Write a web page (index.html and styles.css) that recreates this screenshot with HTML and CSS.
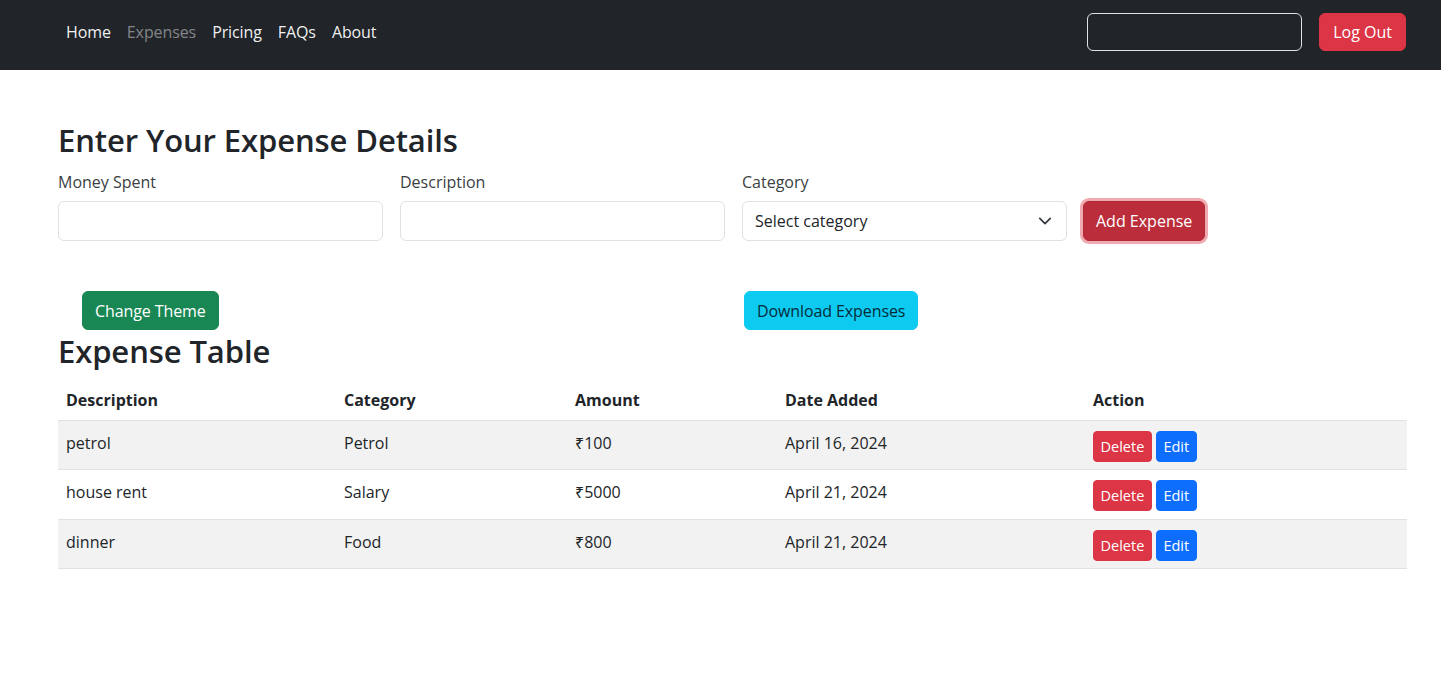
FILE: index.html
```html
<!DOCTYPE html>
<html lang="en">
<head>
<meta charset="utf-8">
<title>Expenses</title>
<link rel="stylesheet" href="styles.css">
</head>
<body>
<nav class="navbar">
  <ul class="nav-links">
    <li><a class="nav-link" href="#">Home</a></li>
    <li><a class="nav-link muted" href="#">Expenses</a></li>
    <li><a class="nav-link" href="#">Pricing</a></li>
    <li><a class="nav-link" href="#">FAQs</a></li>
    <li><a class="nav-link" href="#">About</a></li>
  </ul>
  <div class="nav-right">
    <input class="search" type="text">
    <button class="btn btn-danger btn-logout">Log Out</button>
  </div>
</nav>

<main class="main">
  <h2 class="title">Enter Your Expense Details</h2>
  <form class="expense-form">
    <div class="field">
      <label class="label">Money Spent</label>
      <input class="control" type="text">
    </div>
    <div class="field">
      <label class="label">Description</label>
      <input class="control" type="text">
    </div>
    <div class="field">
      <label class="label">Category</label>
      <div class="control select">
        <span>Select category</span>
        <svg class="chevron" width="14" height="14" viewBox="0 0 16 16"><path d="M2 5l6 6 6-6" fill="none" stroke="#343a40" stroke-width="2" stroke-linecap="round" stroke-linejoin="round"/></svg>
      </div>
    </div>
    <div class="field field-btn">
      <button type="button" class="btn btn-add">Add Expense</button>
    </div>
  </form>

  <div class="tools">
    <div class="tool-left"><button class="btn btn-success">Change Theme</button></div>
    <div class="tool-right"><button class="btn btn-info">Download Expenses</button></div>
  </div>

  <h2 class="title title-table">Expense Table</h2>
  <table class="table">
    <thead>
      <tr>
        <th class="c1">Description</th>
        <th class="c2">Category</th>
        <th class="c3">Amount</th>
        <th class="c4">Date Added</th>
        <th class="c5">Action</th>
      </tr>
    </thead>
    <tbody>
      <tr class="odd">
        <td>petrol</td><td>Petrol</td><td>₹100</td><td>April 16, 2024</td>
        <td><button class="btn btn-sm btn-danger">Delete</button> <button class="btn btn-sm btn-primary">Edit</button></td>
      </tr>
      <tr>
        <td>house rent</td><td>Salary</td><td>₹5000</td><td>April 21, 2024</td>
        <td><button class="btn btn-sm btn-danger">Delete</button> <button class="btn btn-sm btn-primary">Edit</button></td>
      </tr>
      <tr class="odd">
        <td>dinner</td><td>Food</td><td>₹800</td><td>April 21, 2024</td>
        <td><button class="btn btn-sm btn-danger">Delete</button> <button class="btn btn-sm btn-primary">Edit</button></td>
      </tr>
    </tbody>
  </table>
</main>
</body>
</html>
```

FILE: styles.css
```css
* { box-sizing: border-box; }
body {
  margin: 0;
  font-family: "Open Sans", "Noto Sans", "Liberation Sans", sans-serif;
  font-size: 16px;
  line-height: 1.5;
  color: #212529;
  background: #fff;
}
.navbar {
  height: 70px;
  background: #212529;
  display: flex;
  align-items: center;
  justify-content: space-between;
  padding: 0 35px 6px 58px;
}
.nav-links {
  list-style: none;
  margin: 0;
  padding: 0;
  display: flex;
}
.nav-link {
  display: block;
  padding: 8px 8px;
  color: rgba(255,255,255,0.95);
  text-decoration: none;
  font-size: 16px;
  letter-spacing: -0.1px;
}
.nav-link.muted { color: rgba(255,255,255,0.45); }
.nav-right { display: flex; align-items: center; gap: 17px; }
.search {
  width: 215px;
  height: 38px;
  background: #212529;
  border: 1px solid #dee2e6;
  border-radius: 6px;
}
.btn {
  font-family: inherit;
  font-size: 16px;
  line-height: 1.5;
  border: 1px solid transparent;
  border-radius: 6px;
  padding: 6px 12px;
  cursor: pointer;
}
.btn-danger { background: #dc3545; border-color: #dc3545; color: #fff; }
.btn-primary { background: #0d6efd; border-color: #0d6efd; color: #fff; }
.btn-success { background: #198754; border-color: #198754; color: #fff; }
.btn-info { background: #0dcaf0; border-color: #0dcaf0; color: #052c3a; }
.btn-logout { height: 38px; padding: 0 13px; }
.btn-add {
  background: #bb2d3b;
  border-color: #b02a37;
  color: #fff;
  height: 40px;
  box-shadow: 0 0 0 3px rgba(225,83,97,0.5);
}
.btn-sm { font-size: 14.5px; padding: 3px 6.5px; border-radius: 4px; height: 31px; }

.main { padding: 52px 34px 0 58px; }
.title {
  margin: 0 0 9px;
  font-size: 31px;
  font-weight: 600;
  line-height: 1.2;
  letter-spacing: -0.1px;
}
.title-table { margin-bottom: 10px; }
.expense-form {
  display: flex;
  gap: 17px;
  align-items: flex-end;
}
.field { width: 325px; display: flex; flex-direction: column; }
.field-btn { width: auto; margin-left: -1px; }
.label { color: #3a3f44; margin-bottom: 7px; margin-top: 2px; }
.control {
  height: 40px;
  border: 1px solid #dee2e6;
  border-radius: 6px;
  background: #fff;
  font-family: inherit;
  font-size: 16px;
  padding: 6px 12px;
}
.select {
  display: flex;
  align-items: center;
  justify-content: space-between;
  color: #212529;
}
.chevron { margin-right: 2px; }

.tools {
  display: flex;
  margin-top: 50px;
  margin-bottom: 3px;
}
.tool-left { width: 686px; padding-left: 24px; }
.tools .btn { height: 39px; padding: 0 12px; letter-spacing: -0.1px; }

.table {
  width: 100%;
  border-collapse: collapse;
}
.table th {
  text-align: left;
  font-weight: 700;
  padding: 0 8px;
  height: 40px;
  border-bottom: 1px solid #dee2e6;
}
.table td {
  padding: 10px 8px 0;
  height: 49.5px;
  vertical-align: top;
  border-bottom: 1px solid #dee2e6;
}
.table tr.odd td { background: #f2f2f2; }
.c1 { width: 278px; }
.c2 { width: 231px; }
.c3 { width: 210px; }
.c4 { width: 308px; }
```
